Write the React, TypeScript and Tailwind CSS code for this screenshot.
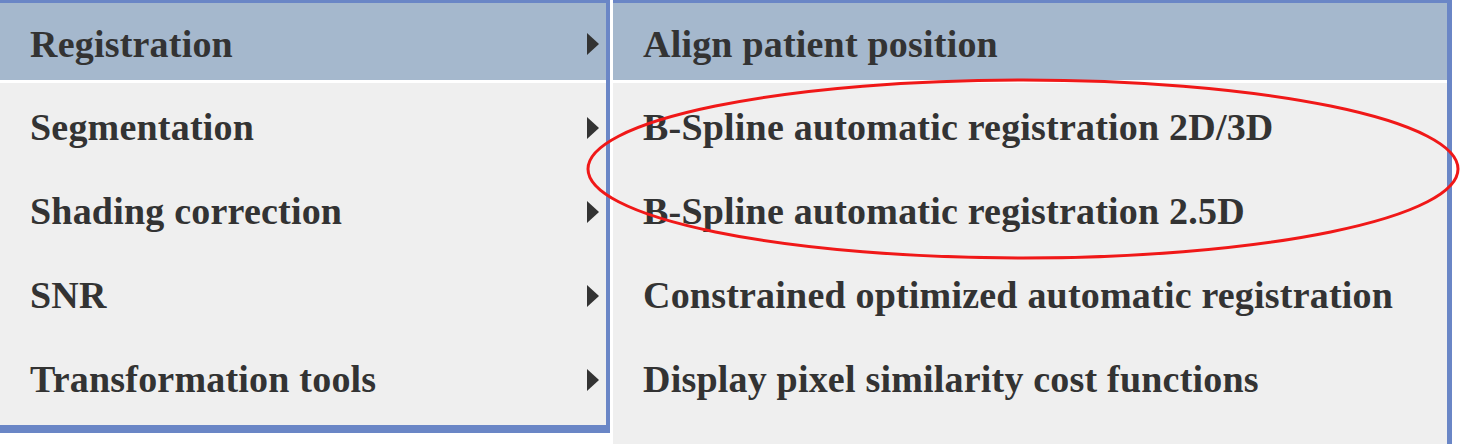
import React from 'react';

const leftItems = ['Registration', 'Segmentation', 'Shading correction', 'SNR', 'Transformation tools'];
const rightItems = [
  'Align patient position',
  'B-Spline automatic registration 2D/3D',
  'B-Spline automatic registration 2.5D',
  'Constrained optimized automatic registration',
  'Display pixel similarity cost functions',
];

const Arrow = () => (
  <svg width="14" height="24" viewBox="0 0 14 24" className="shrink-0">
    <path d="M1 1 L13 12 L1 23 Z" fill="#333333" />
  </svg>
);

const Row: React.FC<{ label: string; active?: boolean; arrow?: boolean }> = ({ label, active, arrow }) => (
  <>
    <div
      className={`flex items-center justify-between pl-[30px] pr-[6px] pt-[5px] ${
        active ? 'h-[77px] bg-[#a5b8cd]' : 'h-[84px]'
      }`}
    >
      <span className="whitespace-nowrap tracking-[0.2px]">{label}</span>
      {arrow && <Arrow />}
    </div>
    {active && <div className="h-[3px] bg-white" />}
  </>
);

export default function App() {
  return (
    <div
      className="relative w-[1460px] h-[444px] overflow-hidden bg-white flex text-[38px] font-bold text-[#333333]"
      style={{ fontFamily: '"Liberation Serif", "Times New Roman", serif' }}
    >
      <div className="w-[610px] self-start bg-[#efefef] border-t-[3px] border-r-[4px] border-b-[8px] border-[#6a86c6] pb-[6px]">
        {leftItems.map((l, i) => (
          <Row key={l} label={l} active={i === 0} arrow />
        ))}
      </div>
      <div className="w-[3px] bg-white" />
      <div className="w-[839px] h-full bg-[#efefef] border-t-[3px] border-r-[5px] border-[#6a86c6]">
        {rightItems.map((l, i) => (
          <Row key={l} label={l} active={i === 0} />
        ))}
      </div>
      <svg className="absolute inset-0 pointer-events-none" width="1460" height="444">
        <ellipse cx="1023" cy="169" rx="435" ry="89" fill="none" stroke="#f01818" strokeWidth="3" />
      </svg>
    </div>
  );
}
